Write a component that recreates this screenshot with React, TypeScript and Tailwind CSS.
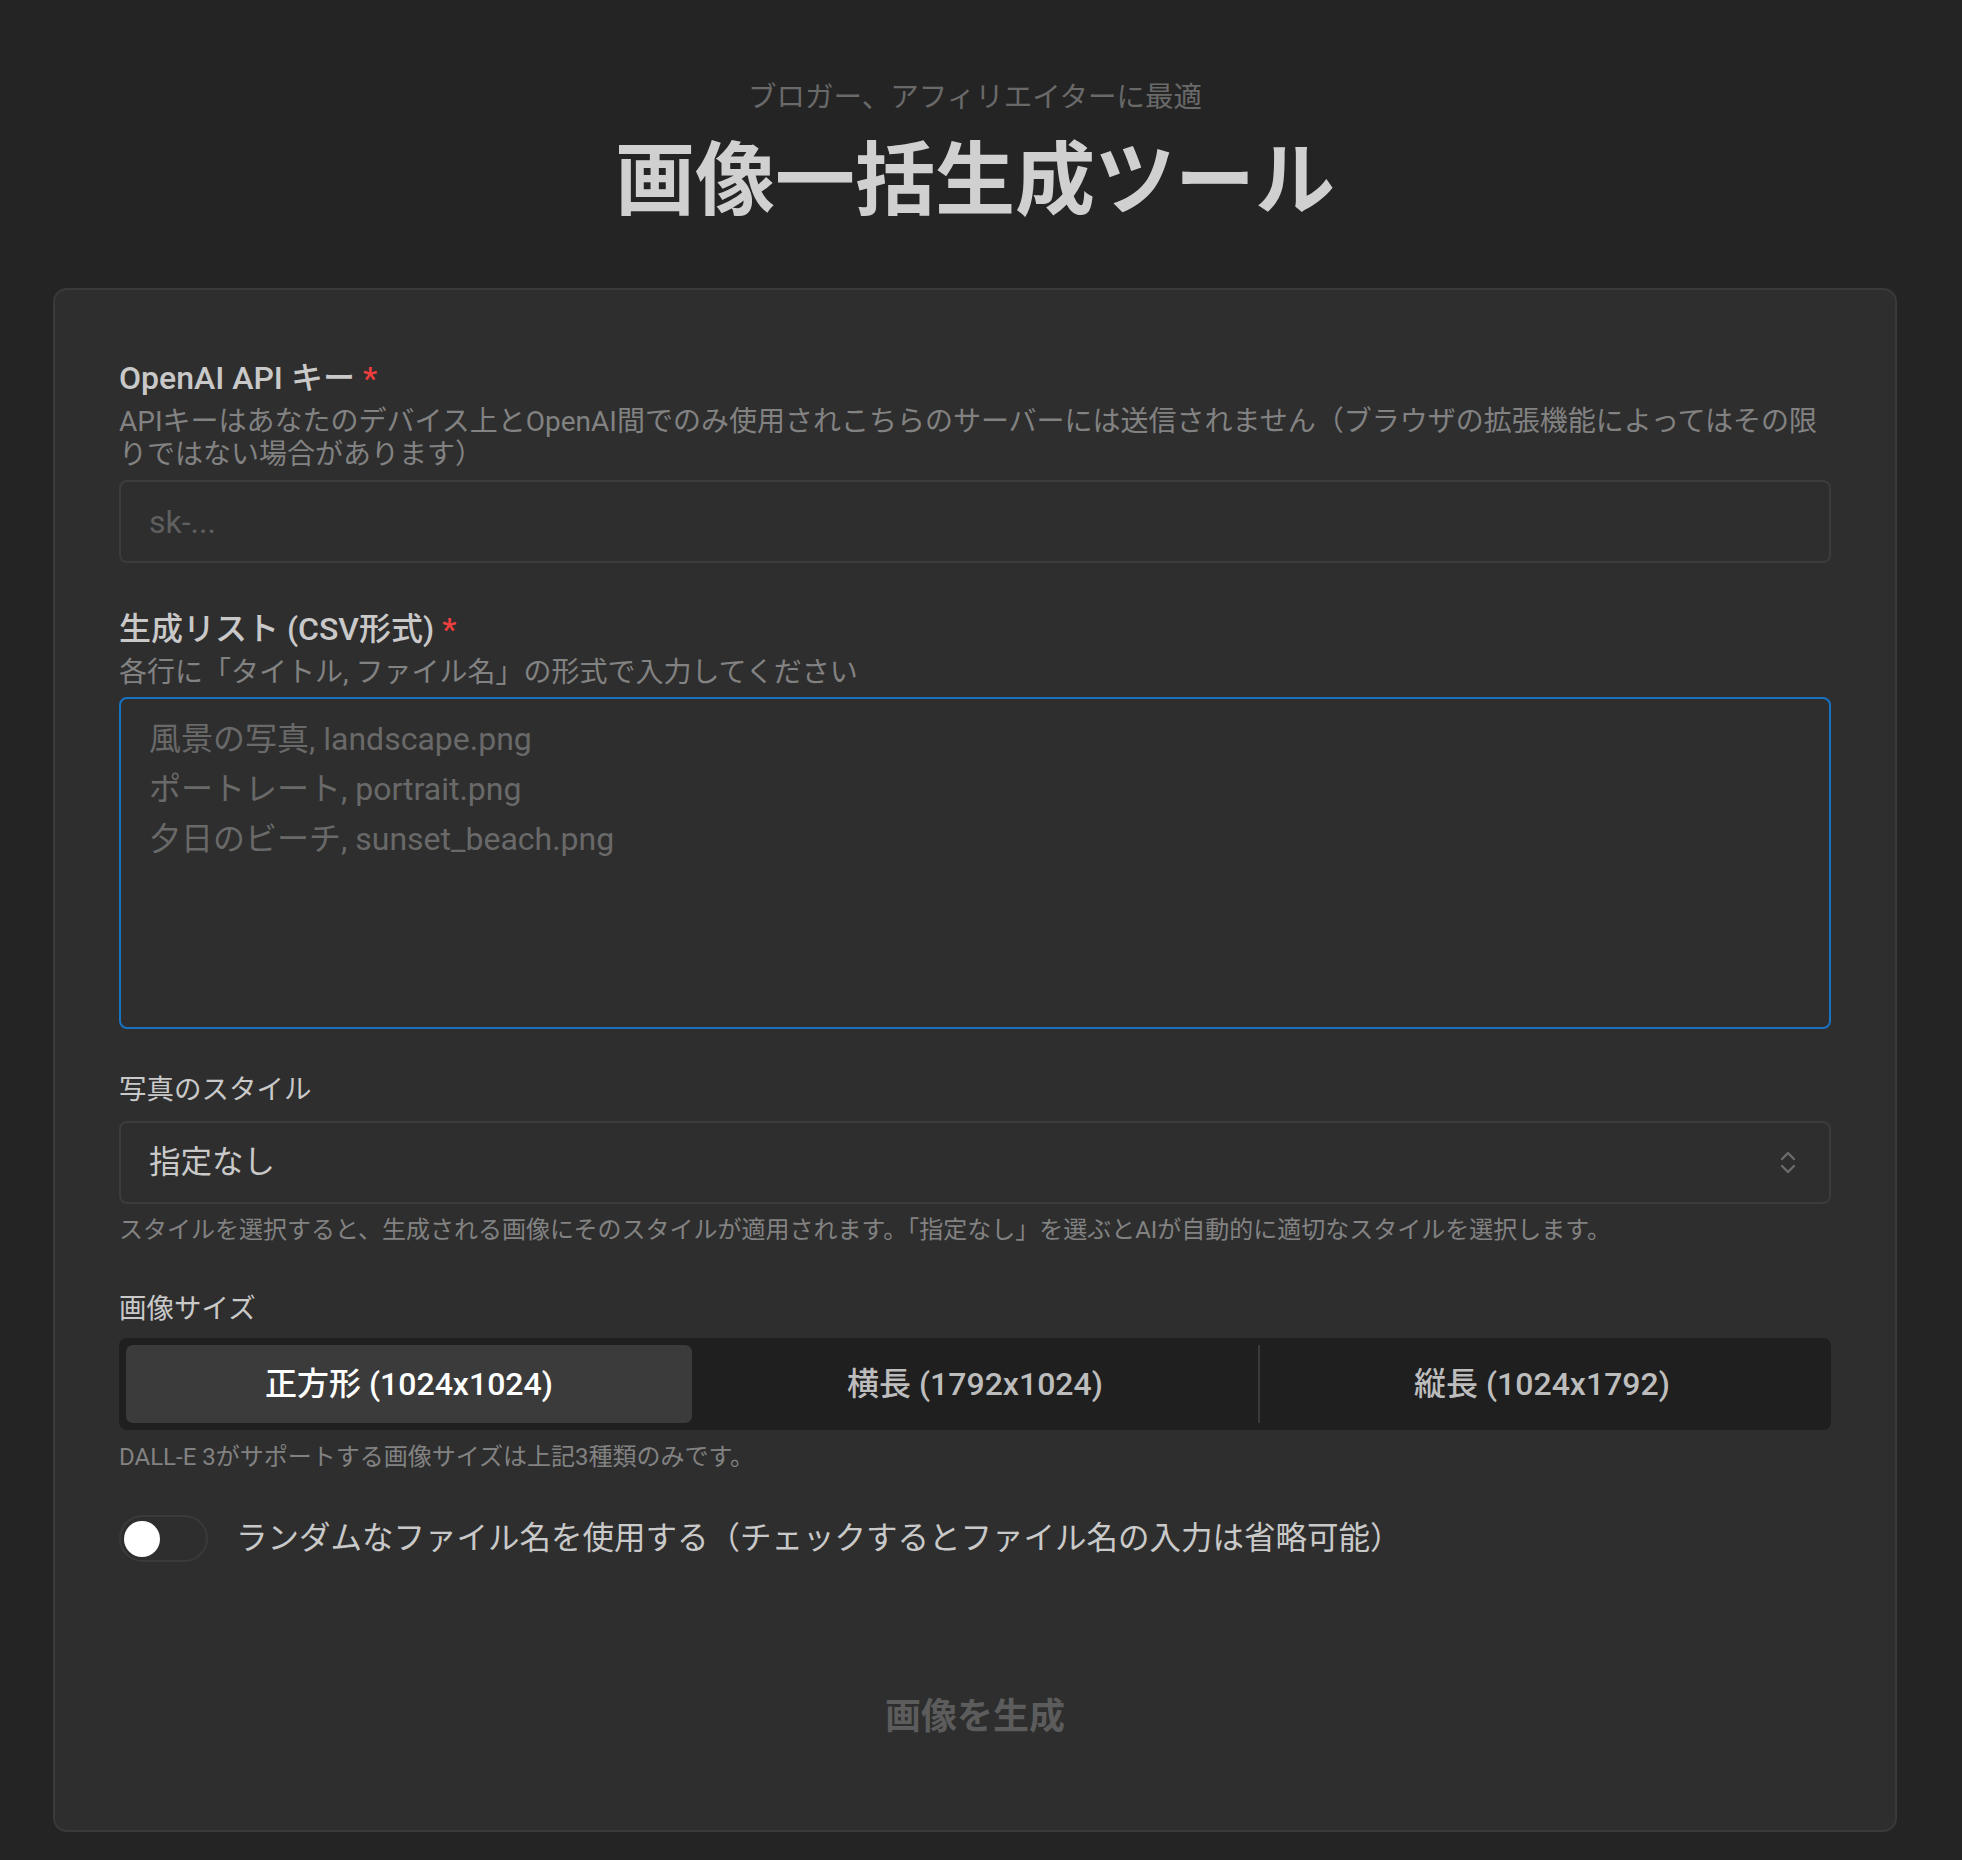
import React from "react";

export default function App() {
  return (
    <div className="min-h-screen bg-[#242424] pl-[53px] pr-[65px] pt-[78px] pb-[28px] font-[Roboto,'Noto_Sans_CJK_JP',sans-serif]">
      <p className="text-center text-[28.5px] leading-[40px] text-[#696969]">
        ブロガー、アフィリエイターに最適
      </p>
      <h1 className="mt-[16px] text-center text-[80px] leading-[95px] font-bold text-[#d0d0d0]">
        画像一括生成ツール
      </h1>

      <div className="mt-[59px] rounded-[14px] border-2 border-[#3a3a3a] bg-[#2e2e2e] px-[64px] pt-[68px] pb-[64px]">
        {/* API key */}
        <div className="flex items-center text-[32px] leading-[40px] font-medium text-[#c9c9c9]">
          <span>OpenAI API キー</span>
          <span className="ml-[8px] text-[#f03e3e]">*</span>
        </div>
        <p className="mt-[7px] text-[28px] leading-[33px] text-[#828282]">
          APIキーはあなたのデバイス上とOpenAI間でのみ使用されこちらのサーバーには送信されません（ブラウザの拡張機能によってはその限りではない場合があります）
        </p>
        <div className="mt-[9px] flex h-[83px] items-center rounded-[8px] border-2 border-[#3c3c3c] bg-[#2e2e2e] px-[28px]">
          <input
            className="w-full bg-transparent text-[32px] text-[#c9c9c9] outline-none placeholder:text-[#5f5f5f]"
            placeholder="sk-..."
          />
        </div>

        {/* CSV list */}
        <div className="mt-[46px] flex items-center text-[32px] leading-[40px] font-medium text-[#c9c9c9]">
          <span>生成リスト (CSV形式)</span>
          <span className="ml-[8px] text-[#f03e3e]">*</span>
        </div>
        <p className="mt-[7px] text-[28px] leading-[33px] text-[#828282]">
          各行に「タイトル, ファイル名」の形式で入力してください
        </p>
        <textarea
          className="mt-[8px] block h-[332px] w-full resize-none rounded-[8px] border-2 border-[#1971c2] bg-[#2e2e2e] px-[28px] pt-[15px] text-[32px] leading-[50px] text-[#c9c9c9] outline-none placeholder:text-[#696969]"
          placeholder={"風景の写真, landscape.png\nポートレート, portrait.png\n夕日のビーチ, sunset_beach.png"}
        />

        {/* Style */}
        <div className="mt-[43px] text-[27.5px] leading-[35px] text-[#c9c9c9]">
          写真のスタイル
        </div>
        <div className="mt-[14px] flex h-[83px] items-center justify-between rounded-[8px] border-2 border-[#3c3c3c] bg-[#2e2e2e] pl-[28px] pr-[33px]">
          <span className="text-[31.5px] text-[#c9c9c9]">指定なし</span>
          <svg width="16" height="25" viewBox="0 0 16 25" fill="none">
            <polyline
              points="2,9 8,3 14,9"
              stroke="#6b6b6b"
              strokeWidth="2.4"
              strokeLinecap="round"
              strokeLinejoin="round"
            />
            <polyline
              points="2,16 8,22 14,16"
              stroke="#6b6b6b"
              strokeWidth="2.4"
              strokeLinecap="round"
              strokeLinejoin="round"
            />
          </svg>
        </div>
        <p className="mt-[11px] text-[24px] leading-[30px] text-[#828282]">
          スタイルを選択すると、生成される画像にそのスタイルが適用されます。「指定なし」を選ぶとAIが自動的に適切なスタイルを選択します。
        </p>

        {/* Size */}
        <div className="mt-[46px] text-[27.5px] leading-[35px] text-[#c9c9c9]">
          画像サイズ
        </div>
        <div className="mt-[12px] grid h-[92px] grid-cols-3 rounded-[8px] bg-[#1f1f1f] p-[7px]">
          <div className="flex items-center justify-center rounded-[7px] bg-[#3b3b3b] text-[32px] font-medium text-white">
            正方形 (1024x1024)
          </div>
          <div className="flex items-center justify-center text-[32px] font-medium text-[#bdbdbd]">
            横長 (1792x1024)
          </div>
          <div className="flex items-center justify-center border-l-2 border-[#3a3a3a] text-[32px] font-medium text-[#bdbdbd]">
            縦長 (1024x1792)
          </div>
        </div>
        <p className="mt-[12px] text-[24px] leading-[30px] text-[#828282]">
          DALL-E 3がサポートする画像サイズは上記3種類のみです。
        </p>

        {/* Toggle */}
        <div className="mt-[43px] flex h-[47px] items-center">
          <div className="flex h-[47px] w-[89px] items-center rounded-full border-2 border-[#3a3a3a] bg-[#2e2e2e] pl-[3px]">
            <div className="h-[36px] w-[36px] rounded-full bg-white" />
          </div>
          <span className="ml-[28px] text-[31.5px] text-[#c9c9c9]">
            ランダムなファイル名を使用する（チェックするとファイル名の入力は省略可能）
          </span>
        </div>

        {/* Button */}
        <button
          disabled
          className="mt-[106px] flex h-[98px] w-full items-center justify-center rounded-[8px] bg-[#2e2e2e] text-[36px] font-bold text-[#5c5c5c]"
        >
          画像を生成
        </button>
      </div>
    </div>
  );
}
